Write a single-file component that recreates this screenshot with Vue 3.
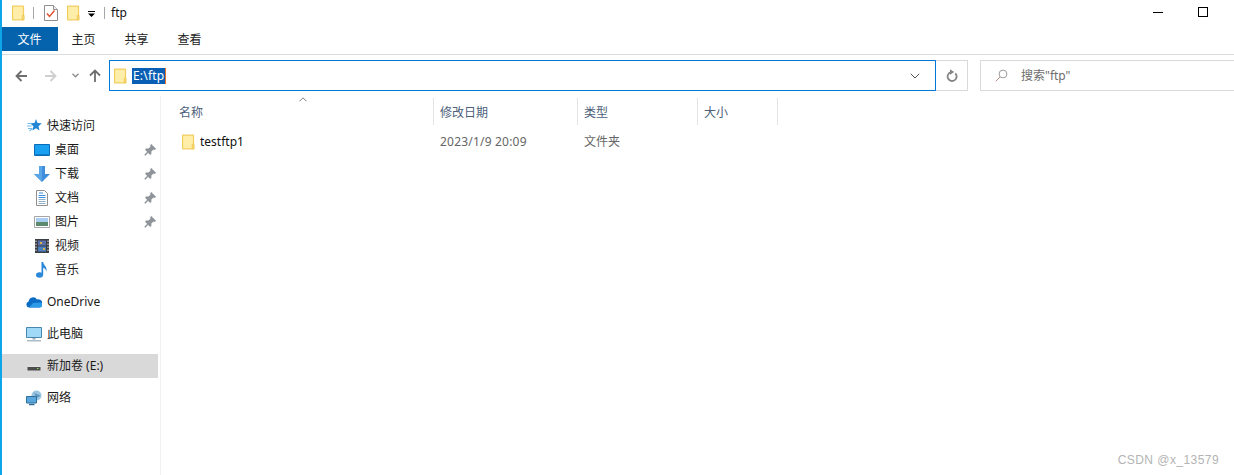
<script setup>
const quick = [
  { label: '桌面', icon: 'desktop', pin: true },
  { label: '下载', icon: 'download', pin: true },
  { label: '文档', icon: 'doc', pin: true },
  { label: '图片', icon: 'pic', pin: true },
  { label: '视频', icon: 'video', pin: false },
  { label: '音乐', icon: 'music', pin: false },
]
const tabs = ['主页', '共享', '查看']
const cols = [
  { label: '修改日期', cls: 'c-date' },
  { label: '类型', cls: 'c-type' },
  { label: '大小', cls: 'c-size' },
]
</script>

<template>
  <div class="win">
    <svg class="defs" width="0" height="0">
      <defs>
        <symbol id="folder" viewBox="0 0 14 16">
          <path d="M.5.5h12v15H.5z" fill="#fde58f" stroke="#eec64e"/>
          <path d="M1.500 1.500h10v13h-10z" fill="#ffeeaa"/>
          <path d="M11 10.500h2v5h-2z" fill="#f8d775" stroke="#eec64e" stroke-width=".8"/>
        </symbol>
        <symbol id="pin" viewBox="0 0 12 12">
          <path d="M7.200 0 12 4.800 10.600 6 9.600 5.400 7.400 7.600 7.400 9.800 6.200 11 1 5.800 2.200 4.600 4.400 4.600 6.600 2.400 6 1.400z" fill="#8e9499"/>
          <path d="M3.800 8.200 .8 11.200" stroke="#8e9499" stroke-width="1.400"/>
        </symbol>
      </defs>
    </svg>

    <header class="title">
      <svg class="qa-f" width="13" height="16"><use href="#folder"/></svg>
      <i class="qa-sep"></i>
      <svg class="qa-c" width="14" height="16" viewBox="0 0 14 16">
        <path d="M.500.500h9l4 4v11H.500z" fill="#fff" stroke="#8f8f8f"/>
        <path d="M9.500.500v4h4" fill="#eee" stroke="#8f8f8f"/>
        <path d="M3 8.500l2.500 3 5-6" fill="none" stroke="#e2502b" stroke-width="1.400"/>
      </svg>
      <svg class="qa-f2" width="13" height="16"><use href="#folder"/></svg>
      <svg class="qa-d" width="7" height="6" viewBox="0 0 7 6">
        <path d="M0 0h7v1H0z" fill="#000"/><path d="M0 2.500h7L3.500 6z" fill="#000"/>
      </svg>
      <i class="qa-sep s2"></i>
      <span class="t-name">ftp</span>
      <span class="grow"></span>
      <i class="min"></i>
      <i class="max"></i>
    </header>

    <nav class="tabs">
      <span class="file">文件</span>
      <span v-for="t in tabs" :key="t" class="tab">{{ t }}</span>
    </nav>

    <section class="addr-row">
      <div class="arrows">
        <svg width="12" height="12" viewBox="0 0 12 12" class="a-back">
          <path d="M12 6H2M6.500 1 1.500 6l5 5" fill="none" stroke="#6d6d6d" stroke-width="1.800"/>
        </svg>
        <svg width="12" height="12" viewBox="0 0 12 12" class="a-fwd">
          <path d="M0 6h10M5.500 1l5 5-5 5" fill="none" stroke="#cfcfcf" stroke-width="1.800"/>
        </svg>
        <svg width="7" height="5" viewBox="0 0 7 5" class="a-down">
          <path d="M.500.800 3.500 3.800 6.500.800" fill="none" stroke="#8a8a8a" stroke-width="1.300"/>
        </svg>
        <svg width="12" height="13" viewBox="0 0 12 13" class="a-up">
          <path d="M6 13V2M1 6.500 6 1.500l5 5" fill="none" stroke="#6d6d6d" stroke-width="1.800"/>
        </svg>
      </div>
      <div class="addr">
        <svg width="13" height="16"><use href="#folder"/></svg>
        <span class="path">E:\ftp</span>
        <span class="grow"></span>
        <svg width="10" height="6" viewBox="0 0 10 6" class="chev">
          <path d="M.800.800 5 5 9.200.800" fill="none" stroke="#555" stroke-width="1"/>
        </svg>
      </div>
      <div class="refresh">
        <svg width="12" height="13" viewBox="0 0 12 13">
          <path d="M9.300 4.300A4.500 4.500 0 1 1 4.800 3.200" fill="none" stroke="#858585" stroke-width="1.800"/>
          <path d="M4 .2 8.200 3 4 5.800z" fill="#858585"/>
        </svg>
      </div>
      <div class="search">
        <svg width="13" height="13" viewBox="0 0 13 13">
          <circle cx="8" cy="5" r="3.900" fill="none" stroke="#9a9a9a"/>
          <path d="M5 8 .8 12.300" stroke="#b98f82" stroke-width="1"/>
        </svg>
        <span>搜索"ftp"</span>
      </div>
    </section>

    <main class="body">
      <aside class="side">
        <div class="row top">
          <svg class="ic" width="16" height="16" viewBox="0 0 16 16">
            <path d="M10 1l1.500 3.900 4.300.4-3.300 2.900 1 4.300L10 10.300 6.400 12.500l1-4.300-3.200-2.900 4.300-.4z" fill="#2186d6"/>
            <path d="M1.500 5.500h4M1 8h4.500M2 10.500h4M3.500 13l3-2.500" stroke="#6ec0f0" stroke-width="1.100"/>
          </svg>
          <span>快速访问</span>
        </div>
        <div v-for="q in quick" :key="q.label" class="row sub">
          <svg class="ic" width="16" height="16" viewBox="0 0 16 16" v-if="q.icon === 'desktop'">
            <path d="M.500 2.500h15v11H.500z" fill="#1aa0f0" stroke="#0a6cb6"/>
            <path d="M1.500 12h13v1h-13z" fill="#0c7ccc"/>
          </svg>
          <svg class="ic" width="16" height="16" viewBox="0 0 16 16" v-else-if="q.icon === 'download'">
            <path d="M5 0h6v8h5l-8 8-8-8h5z" fill="#3f8fdc"/>
            <path d="M5 0h3v16l-8-8h5z" fill="#5aa7e8"/>
          </svg>
          <svg class="ic" width="16" height="16" viewBox="0 0 16 16" v-else-if="q.icon === 'doc'">
            <path d="M2.500.500h8l3 3v12h-11z" fill="#fff" stroke="#8f8f8f"/>
            <path d="M5 3h4M4.500 5.500h7M4.500 7.500h7" stroke="#3f8fdc"/>
            <path d="M4.500 9.500h7M4.500 11.500h7M4.500 13.500h7" stroke="#8fb0c8"/>
          </svg>
          <svg class="ic" width="16" height="16" viewBox="0 0 16 16" v-else-if="q.icon === 'pic'">
            <path d="M.500 2.500h15v11H.500z" fill="#fff" stroke="#a5a5a5"/>
            <path d="M2 4h12v4H2z" fill="#a8cdf0"/>
            <path d="M2 8h12v4H2z" fill="#5c8a6c"/>
          </svg>
          <svg class="ic" width="16" height="16" viewBox="0 0 16 16" v-else-if="q.icon === 'video'">
            <path d="M1 1h14v14H1z" fill="#3a3f45"/>
            <path d="M4 2.500h8v5H4z" fill="#5a6fa8"/>
            <path d="M4 8.500h8v5H4z" fill="#4a7fc0"/>
            <path d="M6 4h2v2H6zM9 10h2v2H9z" fill="#d6b24a"/>
            <path d="M2 2.500v11M14 2.500v11" stroke="#ddd" stroke-dasharray="1.500 1.500"/>
          </svg>
          <svg class="ic" width="16" height="16" viewBox="0 0 16 16" v-else>
            <ellipse cx="5.500" cy="13" rx="3.500" ry="2.800" fill="#2b88d8"/>
            <path d="M7.500 0h1.700c.3 3.500 4.300 4.500 3.300 9.500-.5-2.300-2-3.500-3.300-3.800V13H7.500z" fill="#2b88d8"/>
          </svg>
          <span>{{ q.label }}</span>
          <svg v-if="q.pin" class="pin" width="12" height="12"><use href="#pin"/></svg>
        </div>

        <div class="row top gap">
          <svg class="ic" width="16" height="16" viewBox="0 0 16 16">
            <path d="M3 13.500a3 3 0 0 1-.3-5.900A4.500 4.500 0 0 1 11 5.500a3.500 3.500 0 0 1 2.500 8z" fill="#0a6cc4"/>
            <path d="M3 13.500h10.500a2.500 2.500 0 0 0 .5-5L7 9z" fill="#2b9be8"/>
          </svg>
          <span>OneDrive</span>
        </div>
        <div class="row top gap">
          <svg class="ic" width="16" height="16" viewBox="0 0 16 16">
            <path d="M.500 1.500h15v10H.500z" fill="#9fd9f7" stroke="#4a86ac"/>
            <path d="M6.500 12h3v1.500h-3z" fill="#9ab"/>
            <path d="M1 14h14v1.500H1z" fill="#aebcc6"/>
          </svg>
          <span>此电脑</span>
        </div>
        <div class="row top gap sel">
          <svg class="ic" width="16" height="16" viewBox="0 0 16 16">
            <path d="M2 9 3.500 7h9L14 9z" fill="#dfdfdf"/>
            <path d="M1.500 9h13v3.500h-13z" fill="#4d4d4d"/>
            <path d="M11 10h1.500v1H11z" fill="#7fe05a"/>
          </svg>
          <span>新加卷 (E:)</span>
        </div>
        <div class="row top gap">
          <svg class="ic" width="16" height="16" viewBox="0 0 16 16">
            <circle cx="10.500" cy="5.500" r="5" fill="#9cc6e0"/>
            <path d="M7 2.500c2 1 3 3 2 5 2 .5 4-.5 5.500-2" fill="#5f97bf"/>
            <path d="M.500 6.500h10v6.500H.500z" fill="#5aa7de" stroke="#2f6f9c"/>
            <path d="M3 14.500h5.500" stroke="#2f6f9c" stroke-width="1.500"/>
          </svg>
          <span>网络</span>
        </div>
      </aside>

      <div class="list">
        <div class="heads">
          <div class="col c-name">
            名称
            <svg class="sort" width="8" height="5" viewBox="0 0 8 5">
              <path d="M.500 4.300 4 .8 7.500 4.300" fill="none" stroke="#7d7d7d" stroke-width="1"/>
            </svg>
          </div>
          <div v-for="c in cols" :key="c.label" class="col" :class="c.cls">{{ c.label }}</div>
        </div>
        <div class="file-row">
          <div class="cell c-name name">
            <svg width="13" height="16"><use href="#folder"/></svg>
            <span>testftp1</span>
          </div>
          <div class="cell c-date dim date">2023/1/9 20:09</div>
          <div class="cell c-type dim">文件夹</div>
        </div>
      </div>
    </main>

    <div class="mark">CSDN @x_13579</div>
  </div>
</template>

<style>
html, body { margin: 0; background: #fff; }
</style>

<style scoped>
.win {
  width: 1234px;
  height: 475px;
  box-sizing: border-box;
  border-left: 2px solid #0ea5e9;
  background: #fff;
  overflow: hidden;
  position: relative;
  font: 12px/16px "Noto Sans", "Noto Sans CJK SC", sans-serif;
  color: #1a1a1a;
}
.defs { position: absolute; }
svg { display: block; flex: none; }
.grow { flex: 1; }

.title { height: 26px; display: flex; align-items: center; }
.qa-f { margin-left: 10px; }
.qa-sep { width: 1px; height: 12px; background: #a8a8a8; margin-left: 8px; }
.qa-c { margin-left: 10px; }
.qa-f2 { margin-left: 9px; }
.qa-d { margin-left: 8px; margin-top: 1px; }
.qa-sep.s2 { margin-left: 9px; }
.t-name { margin-left: 6px; color: #111; }
.min { width: 10px; height: 1px; background: #000; margin-right: 35px; margin-top: -1px; }
.max { width: 10px; height: 10px; box-sizing: border-box; border: 1px solid #000; margin-right: 26px; margin-top: -2px; }

.tabs {
  height: 28px;
  display: flex;
  box-sizing: border-box;
  border-bottom: 1px solid #dadbdc;
  padding-bottom: 3px;
  align-items: stretch;
  margin-top: 1px;
}
.file {
  width: 56px; background: #0563ae; color: #fff; box-sizing: border-box;
  padding: 1px 1px 0 0;
  display: flex; align-items: center; justify-content: center;
}
.tab {
  width: 53px; box-sizing: border-box; padding: 1px 2px 0 0;
  display: flex; align-items: center; justify-content: center; color: #222;
}

.addr-row { height: 41px; display: flex; align-items: flex-start; padding-top: 5px; box-sizing: border-box; }
.arrows { width: 107px; height: 31px; display: flex; align-items: center; }
.a-back { margin-left: 13px; }
.a-fwd { margin-left: 18px; }
.a-down { margin-left: 15px; }
.a-up { margin-left: 10px; }
.addr {
  width: 827px; height: 31px; box-sizing: border-box;
  border: 1px solid #0078d7;
  display: flex; align-items: center; padding: 0 15px 0 4px;
}
.path {
  margin-left: 5px; background: #0a5fb4; color: #fff;
  line-height: 16px; height: 16px; padding: 0 1px; letter-spacing: .2px;
  border-right: 1px solid #e8742a;
}
.refresh {
  width: 32px; height: 31px; box-sizing: border-box;
  border: 1px solid #d9d9d9; border-left: 0;
  display: flex; align-items: center; justify-content: center;
}
.search {
  margin-left: 12px; flex: 1; height: 31px; box-sizing: border-box;
  border: 1px solid #d9d9d9; border-right: 0;
  display: flex; align-items: center; padding-left: 14px; gap: 13px; color: #6d6d6d;
}

.body { display: flex; height: 380px; }
.side { width: 158px; height: 100%; box-sizing: border-box; padding-top: 18px; }
.row { height: 24px; display: flex; align-items: center; position: relative; width: 156px; box-sizing: border-box; }
.row .ic { margin-right: 5px; }
.row.top { padding-left: 24px; }
.row.sub { padding-left: 32px; }
.gap { margin-top: 8px; }
.sel { background: #d9d9d9; }
.pin { position: absolute; right: 2px; top: 6px; }

.list { flex: 1; border-left: 1px solid #f1f1f1; }
.heads { display: flex; height: 27px; margin-top: 2px; }
.col {
  box-sizing: border-box; height: 27px; display: flex; align-items: center;
  padding-left: 6px; border-right: 1px solid #e5e5e5; color: #4c607a; position: relative;
  padding-top: 2px;
}
.c-name { width: 273px; }
.col.c-name { padding-left: 18px; }
.c-date { width: 144px; }
.c-type { width: 120px; }
.c-size { width: 80px; }
.sort { position: absolute; left: 138px; top: -1px; }
.file-row { display: flex; height: 22px; margin-top: 6px; align-items: center; }
.cell { box-sizing: border-box; padding-left: 6px; }
.cell.name { display: flex; align-items: center; gap: 5px; padding-left: 21px; color: #111; }
.dim { color: #666; }
.date { letter-spacing: .2px; }
.mark {
  position: absolute; right: 15px; bottom: 7px;
  color: #b4b4b4; font: 12px/16px "Liberation Sans", sans-serif; letter-spacing: .44px;
}
</style>
